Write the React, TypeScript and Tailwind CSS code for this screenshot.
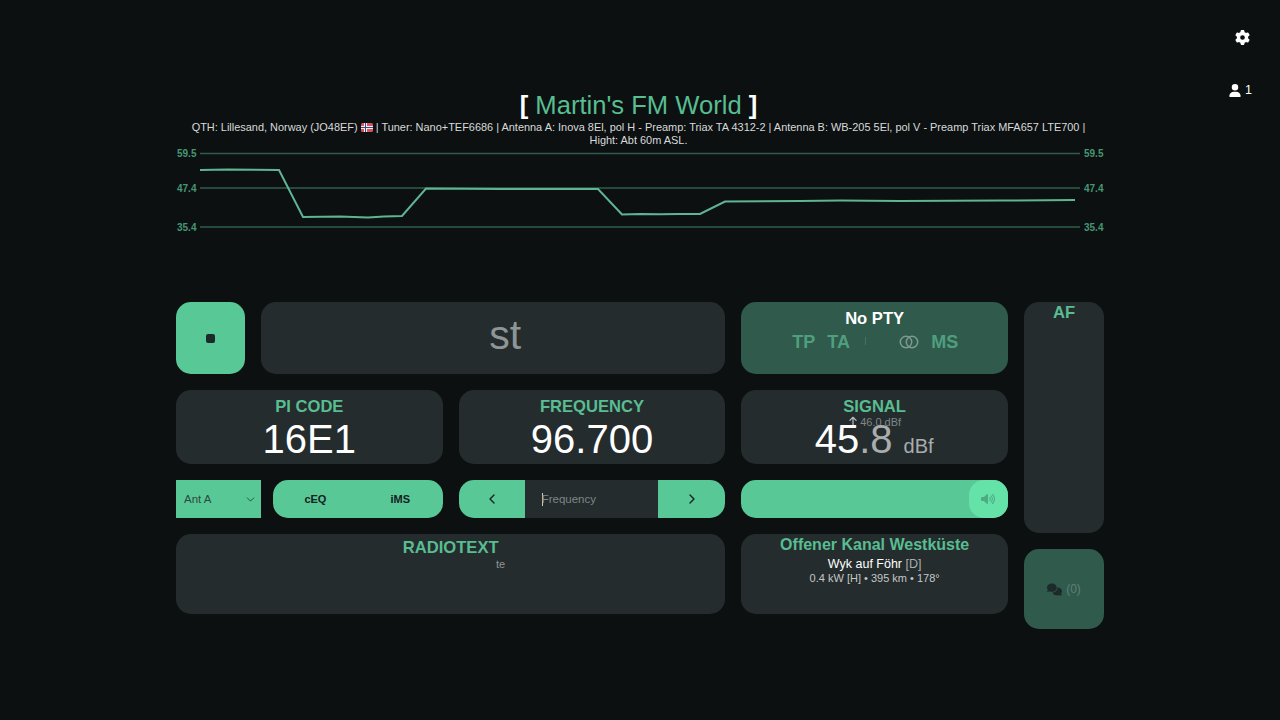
import { ChevronDown, ChevronLeft, ChevronRight } from "lucide-react"
import { FaArrowUp, FaComments, FaGear, FaUser, FaVolumeHigh } from "react-icons/fa6"

const signalPoints =
  "24,23 52,22.5 103,23 127,70 146,69.7 164,69.5 192,70.5 208,69.5 226,69 250,41.5 324,42 394,42 422,42 446,67.5 464,67 484,67.3 504,67 524,67 549,54.5 624,54 664,53.5 724,54 824,53.5 899,53"

const gridLines = [
  { y: 6.5, label: "59.5" },
  { y: 41, label: "47.4" },
  { y: 80, label: "35.4" },
]

function SignalChart() {
  return (
    <svg width="928" height="90" viewBox="0 0 928 90" className="block">
      {gridLines.map((line) => (
        <g key={line.label}>
          <line x1="24" x2="904" y1={line.y} y2={line.y} stroke="#2f5c4c" strokeWidth="1.6" />
          <text x="1" y={line.y + 3.5} fontSize="10" fontWeight="700" fill="#459674">
            {line.label}
          </text>
          <text x="908" y={line.y + 3.5} fontSize="10" fontWeight="700" fill="#459674">
            {line.label}
          </text>
        </g>
      ))}
      <polyline points={signalPoints} fill="none" stroke="#5fb593" strokeWidth="2" />
    </svg>
  )
}

function NorwayFlag() {
  return (
    <svg width="12" height="9" viewBox="0 0 12 9" className="inline-block align-[-0.5px]">
      <rect width="12" height="9" rx="1.5" fill="#d9505f" />
      <rect x="3" width="3" height="9" fill="#f2f2f2" />
      <rect y="3" width="12" height="3" fill="#f2f2f2" />
      <rect x="4" width="1" height="9" fill="#3b4a78" />
      <rect y="4" width="12" height="1" fill="#3b4a78" />
    </svg>
  )
}

function StatCard({ title, children }: { title: string; children: React.ReactNode }) {
  return (
    <div className="relative h-[74px] rounded-[15px] bg-[#242c2e] text-center">
      <h2 className="pt-[8px] text-[16.6px] leading-[18px] font-bold text-[#58bd90]">{title}</h2>
      {children}
    </div>
  )
}

export default function App() {
  return (
    <div className="relative h-[720px] overflow-hidden bg-[#0c1011] font-['Liberation_Sans',Arial,sans-serif] text-white">
      <div className="absolute top-[30px] right-[30px] text-[15px]">
        <FaGear className="h-[15px] w-[15px]" />
      </div>
      <div className="absolute top-[83px] right-[28px] flex items-center gap-[4px] text-[12.5px] leading-[14px]">
        <FaUser className="h-[13px] w-[12px]" />
        <span>1</span>
      </div>

      <div className="mx-auto w-[928px] pt-[90px]">
        <header className="pr-[3px] text-center">
          <h1 className="text-[25.6px] leading-[30px]">
            <span className="font-bold">[</span>{" "}
            <span className="text-[#58bd90]">Martin's FM World</span>{" "}
            <span className="font-bold">]</span>
          </h1>
          <p className="mx-auto mt-[1px] w-[915px] text-[10.95px] leading-[13px] text-[#d8dada]">
            QTH: Lillesand, Norway (JO48EF) <NorwayFlag /> | Tuner: Nano+TEF6686 | Antenna A: Inova 8El, pol H - Preamp: Triax TA 4312-2 | Antenna B: WB-205 5El, pol V - Preamp Triax MFA657 LTE700 | Hight: Abt 60m ASL.
          </p>
        </header>

        <div className="h-[155px]">
          <SignalChart />
        </div>

        <div className="flex gap-4">
          <div className="flex w-[832px] flex-col gap-4">
            <div className="grid grid-cols-3 gap-4">
              <div className="col-span-2 flex gap-4">
                <button className="flex h-[72px] w-[69px] shrink-0 items-center justify-center rounded-[15px] bg-[#58c896]">
                  <span className="h-[9px] w-[9px] rounded-[2px] bg-[#1c2a2a]" />
                </button>
                <div className="flex h-[72px] flex-1 items-center justify-center rounded-[15px] bg-[#242c2e] pb-[4px] pl-[24px] text-[41px] text-[#8f9595]">
                  st
                </div>
              </div>
              <div className="h-[72px] rounded-[15px] bg-[#2f5a4c] text-center">
                <div className="pt-[8px] text-[16.6px] leading-[18px] font-bold">No PTY</div>
                <div className="relative mt-[5px] h-[18px] text-[18px] leading-[18px] font-bold text-[#4f9f7f]">
                  <span className="absolute left-[51px]">TP</span>
                  <span className="absolute left-[86px]">TA</span>
                  <span className="absolute top-[4px] left-[124px] h-[8px] w-px bg-[#3f7362]" />
                  <svg width="20" height="14" viewBox="0 0 20 14" className="absolute top-[2px] left-[158px]">
                    <circle cx="7" cy="7" r="5.7" fill="none" stroke="#7f9a90" strokeWidth="1.5" />
                    <circle cx="13" cy="7" r="5.7" fill="none" stroke="#7f9a90" strokeWidth="1.5" />
                  </svg>
                  <span className="absolute left-[190px]">MS</span>
                </div>
              </div>
            </div>

            <div className="grid grid-cols-3 gap-4">
              <StatCard title="PI CODE">
                <div className="pt-[1px] text-[40px] leading-[44px]">16E1</div>
              </StatCard>
              <StatCard title="FREQUENCY">
                <div className="pt-[1px] text-[40px] leading-[44px]">96.700</div>
              </StatCard>
              <StatCard title="SIGNAL">
                <div className="absolute top-[26px] left-0 w-full text-center text-[11px] leading-[12px] text-[#7f8686]">
                  <FaArrowUp className="mr-[2px] inline h-[10px] w-[10px] align-[0px] text-[#b8bcbc]" />
                  46.0 dBf
                </div>
                <div className="relative flex items-baseline justify-center pt-[1px] pr-[1px] text-[40px] leading-[44px]">
                  <span>45</span>
                  <span className="text-[#a9adad]">.8</span>
                  <span className="ml-[11px] text-[20px] text-[#a9adad]">dBf</span>
                </div>
              </StatCard>
            </div>

            <div className="grid grid-cols-3 gap-4">
              <div className="flex gap-3">
                <div className="flex h-[38px] w-[85px] items-center justify-between bg-[#58c896] pt-[1px] pr-[4px] pl-[8px] text-[11.5px] text-[#2d4a40]">
                  <span>Ant A</span>
                  <ChevronDown className="h-[13px] w-[13px] text-[#1f3a32]" strokeWidth={1.5} />
                </div>
                <div className="flex h-[38px] flex-1 items-center rounded-[15px] bg-[#58c896] text-[11px] font-bold text-[#16201f]">
                  <span className="w-1/2 text-center">cEQ</span>
                  <span className="w-1/2 text-center">iMS</span>
                </div>
              </div>
              <div className="flex h-[38px] overflow-hidden rounded-[15px]">
                <div className="flex w-[66px] items-center justify-center bg-[#58c896] text-[#16201f]">
                  <ChevronLeft className="h-[16px] w-[16px]" strokeWidth={2} />
                </div>
                <div className="flex flex-1 items-center bg-[#242c2e] pt-[1px] pl-[17px] text-[11.5px] text-[#7f8686]">
                  <span className="mr-[-1px] h-[13px] w-px bg-[#c9cccc]" />
                  Frequency
                </div>
                <div className="flex w-[67px] items-center justify-center bg-[#58c896] text-[#16201f]">
                  <ChevronRight className="h-[16px] w-[16px]" strokeWidth={2} />
                </div>
              </div>
              <div className="flex h-[38px] justify-end overflow-hidden rounded-[15px] bg-[#58c896]">
                <div className="flex w-[39px] items-center justify-center rounded-l-[15px] bg-[#64e2a8] text-[#4eaa83]">
                  <FaVolumeHigh className="h-[14px] w-[14px]" />
                </div>
              </div>
            </div>

            <div className="grid grid-cols-3 gap-4">
              <div className="col-span-2 h-[80px] rounded-[15px] bg-[#242c2e] text-center">
                <h2 className="pt-[4px] text-[16.6px] leading-[20px] font-bold text-[#58bd90]">RADIOTEXT</h2>
                <div className="pl-[100px] text-[11px] leading-[12px] text-[#8f9595]">te</div>
              </div>
              <div className="h-[80px] rounded-[15px] bg-[#242c2e] text-center">
                <h2 className="pt-[1px] text-[16px] leading-[20px] font-bold text-[#58bd90]">Offener Kanal Westküste</h2>
                <div className="mt-[2px] text-[12.5px] leading-[14px]">
                  Wyk auf Föhr <span className="text-[#a9adad]">[D]</span>
                </div>
                <div className="text-[11px] leading-[15px] text-[#c4c7c7]">0.4 kW [H] • 395 km • 178°</div>
              </div>
            </div>
          </div>

          <div className="flex w-[80px] flex-col gap-4">
            <div className="h-[231px] rounded-[15px] bg-[#242c2e] text-center">
              <h2 className="pt-[2px] text-[16.6px] leading-[18px] font-bold text-[#58bd90]">AF</h2>
            </div>
            <div className="flex h-[80px] items-center justify-center gap-[4px] rounded-[15px] bg-[#2f5a4c] text-[12px] text-[#5f7f73]">
              <FaComments className="h-[15px] w-[15px] text-[#1c2a2a]" />
              (0)
            </div>
          </div>
        </div>
      </div>
    </div>
  )
}
